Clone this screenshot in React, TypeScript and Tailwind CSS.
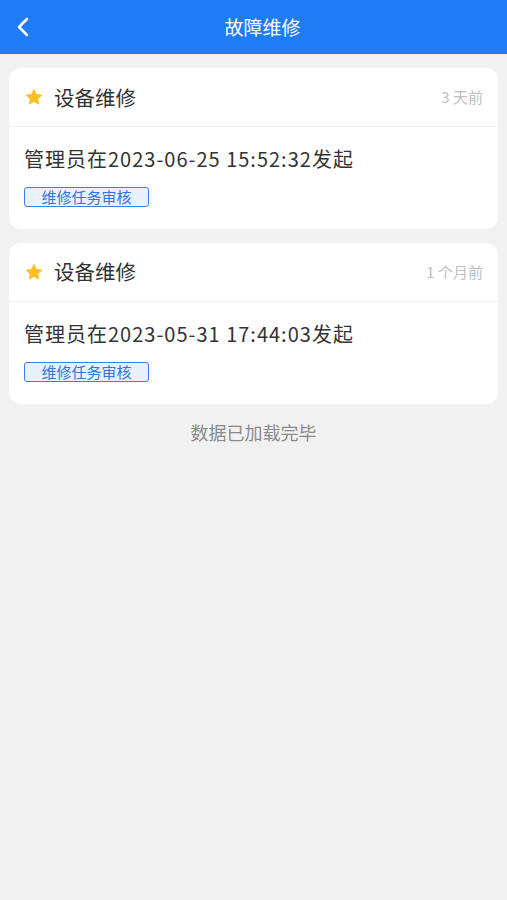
import React from "react";

const items = [
  { title: "设备维修", ago: "3 天前", text: "管理员在2023-06-25 15:52:32发起", tag: "维修任务审核" },
  { title: "设备维修", ago: "1 个月前", text: "管理员在2023-05-31 17:44:03发起", tag: "维修任务审核" },
];

function Star() {
  return (
    <svg width="20" height="20" viewBox="0 0 24 24">
      <path d="M12 1.8l3.1 6.6 7.2.9-5.3 5 1.4 7.1L12 17.9l-6.4 3.5 1.4-7.1-5.3-5 7.2-.9z" fill="#fbbf24" />
    </svg>
  );
}

export default function App() {
  return (
    <div
      className="min-h-[900px] bg-[#f1f1f1]"
      style={{ fontFamily: '"Noto Sans CJK SC", "Noto Sans", sans-serif' }}
    >
      <div className="relative flex h-[54px] items-center justify-center bg-[#1e7cf4] pl-[18px]">
        <svg className="absolute left-[16px] top-[17px]" width="14" height="20" viewBox="0 0 14 20">
          <path d="M11 2L3 10l8 8" fill="none" stroke="white" strokeWidth="2.6" strokeLinecap="round" strokeLinejoin="round" />
        </svg>
        <span className="text-[19px] text-white">故障维修</span>
      </div>
      <div className="flex flex-col gap-[14px] px-[9px] pt-[14px]">
        {items.map((item, i) => (
          <div key={i} className="rounded-[12px] bg-white">
            <div className="flex h-[59px] items-center justify-between border-b border-[#f0f0f0] px-[15px]">
              <div className="flex items-center gap-[10px]">
                <Star />
                <span className="text-[20.5px] text-[#333]">{item.title}</span>
              </div>
              <span className="text-[15px] text-[#c0c0c0]">{item.ago}</span>
            </div>
            <div className="px-[15px] pb-[21px] pt-[17px]">
              <div className="text-[20px] leading-[30px] tracking-[1px] text-[#333]">{item.text}</div>
              <div className="mt-[13px] inline-flex h-[20px] w-[125px] items-center justify-center rounded-[3px] border border-[#3d7de8] bg-[#e9f1ff] text-[15px] text-[#2f74e6]">
                {item.tag}
              </div>
            </div>
          </div>
        ))}
      </div>
      <div className="mt-[15px] text-center text-[18px] text-[#8a8a8a]">数据已加载完毕</div>
    </div>
  );
}
